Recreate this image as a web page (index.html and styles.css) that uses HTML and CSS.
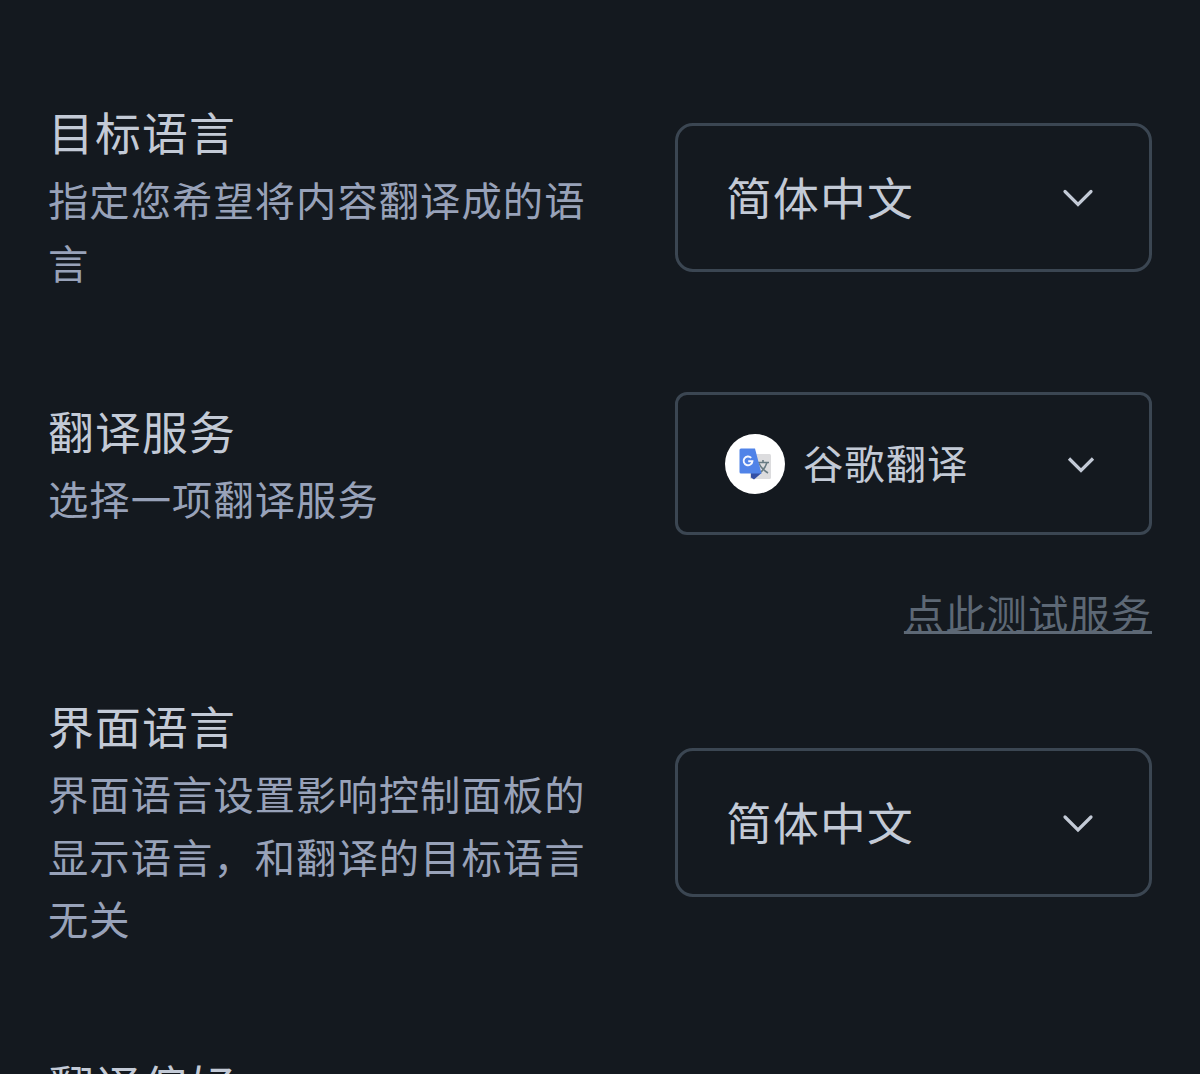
FILE: index.html
```
<!DOCTYPE html>
<html lang="zh-CN">
<head>
  <meta charset="UTF-8" />
  <title>设置</title>
  <link rel="stylesheet" href="styles.css">
</head>
<body>
  <div class="settings">
    <div class="row">
      <div class="info">
        <h2>目标语言</h2>
        <p>指定您希望将内容翻译成的语言</p>
      </div>
      <div class="control">
        <div class="select">
          <span class="value">简体中文</span>
          <svg class="arrow" width="32" height="20" viewBox="0 0 32 20"><path d="M3 4.5 L16 17.5 L29 4.5" /></svg>
        </div>
      </div>
    </div>

    <div class="row service">
      <div class="info">
        <h2>翻译服务</h2>
        <p>选择一项翻译服务</p>
      </div>
      <div class="control">
        <div class="select small">
          <span class="logo">
            <svg width="60" height="60" viewBox="0 0 60 60">
              <rect x="25" y="20" width="21" height="25" rx="1.5" fill="#dcdcde" />
              <path d="M31 28.5h13M38 26v2.5M42 28.5c-1.5 5-4.5 8.5-8 11M34 29.5c2 4.5 5 7 9 9.500" fill="none" stroke="#687b83" stroke-width="1.6" />
              <path d="M26 39h10.5l-7.5 6.500-3-2z" fill="#3450a5" />
              <path d="M16 14.5h14L36.500 39.500H16a1.500 1.500 0 0 1-1.500-1.500V16a1.500 1.500 0 0 1 1.500-1.500z" fill="#5083e8" />
              <path d="M26.2 23.800a4.400 4.400 0 1 0 1.200 3.500h-4.200" fill="none" stroke="#f4f7ff" stroke-width="1.9" />
            </svg>
          </span>
          <span class="value">谷歌翻译</span>
          <svg class="arrow" width="28" height="18" viewBox="0 0 28 18"><path d="M2 3.5 L14 15.5 L26 3.5" /></svg>
        </div>
        <a class="test-link">点此测试服务</a>
      </div>
    </div>

    <div class="row">
      <div class="info">
        <h2>界面语言</h2>
        <p>界面语言设置影响控制面板的显示语言，和翻译的目标语言无关</p>
      </div>
      <div class="control">
        <div class="select">
          <span class="value">简体中文</span>
          <svg class="arrow" width="32" height="20" viewBox="0 0 32 20"><path d="M3 4 L16 17 L29 4" /></svg>
        </div>
      </div>
    </div>

    <div class="row">
      <div class="info">
        <h2>翻译偏好</h2>
      </div>
    </div>
  </div>
</body>
</html>
```
FILE: styles.css
```
* { box-sizing: border-box; }
body {
  margin: 0;
  height: 1074px;
  overflow: hidden;
  background: #14191f;
  color: #c3cad6;
  font-family: "Noto Sans CJK SC", sans-serif;
}
.settings {
  display: flex;
  flex-direction: column;
  gap: 94px;
  padding: 96px 48px 0;
}
.row {
  display: flex;
  justify-content: space-between;
  align-items: center;
  flex-shrink: 0;
}
.info {
  width: 542px;
  padding-bottom: 5px;
}
h2 {
  margin: 0;
  padding-bottom: 2px;
  font-size: 45.8px;
  font-weight: 400;
  line-height: 70px;
  letter-spacing: 1.2px;
}
p {
  margin: 0;
  color: #98a2b9;
  font-size: 40.3px;
  line-height: 62.6px;
  letter-spacing: 1.05px;
}
.control {
  display: flex;
  flex-direction: column;
  align-items: flex-end;
}
.select {
  display: flex;
  align-items: center;
  width: 477px;
  height: 149px;
  padding: 0 55px 0 48px;
  border: 3px solid #3b4652;
  border-radius: 18px;
  font-size: 45.8px;
  letter-spacing: 1.2px;
}
.select.small {
  height: 143px;
  padding: 0 54px 0 47px;
  border-radius: 12px;
  font-size: 40.3px;
  letter-spacing: 1.05px;
}
.value { padding-bottom: 3px; }
.small .value { padding-bottom: 5px; }
.arrow {
  margin-left: auto;
  fill: none;
  stroke: #c3cad6;
  stroke-width: 3.2;
  stroke-linecap: round;
}
.small .arrow { stroke-linecap: butt; }
.logo {
  width: 60px;
  height: 60px;
  margin-right: 18px;
  border-radius: 50%;
  background: #fff;
}
.logo svg { display: block; }
.service {
  align-items: flex-start;
  height: 204px;
}
.service .info { padding-top: 3px; }
.test-link {
  margin-top: 46px;
  color: #5d6875;
  font-size: 40.3px;
  line-height: 62px;
  letter-spacing: 1.05px;
  text-decoration: underline;
  text-decoration-thickness: 3px;
  text-decoration-skip-ink: none;
}
```
